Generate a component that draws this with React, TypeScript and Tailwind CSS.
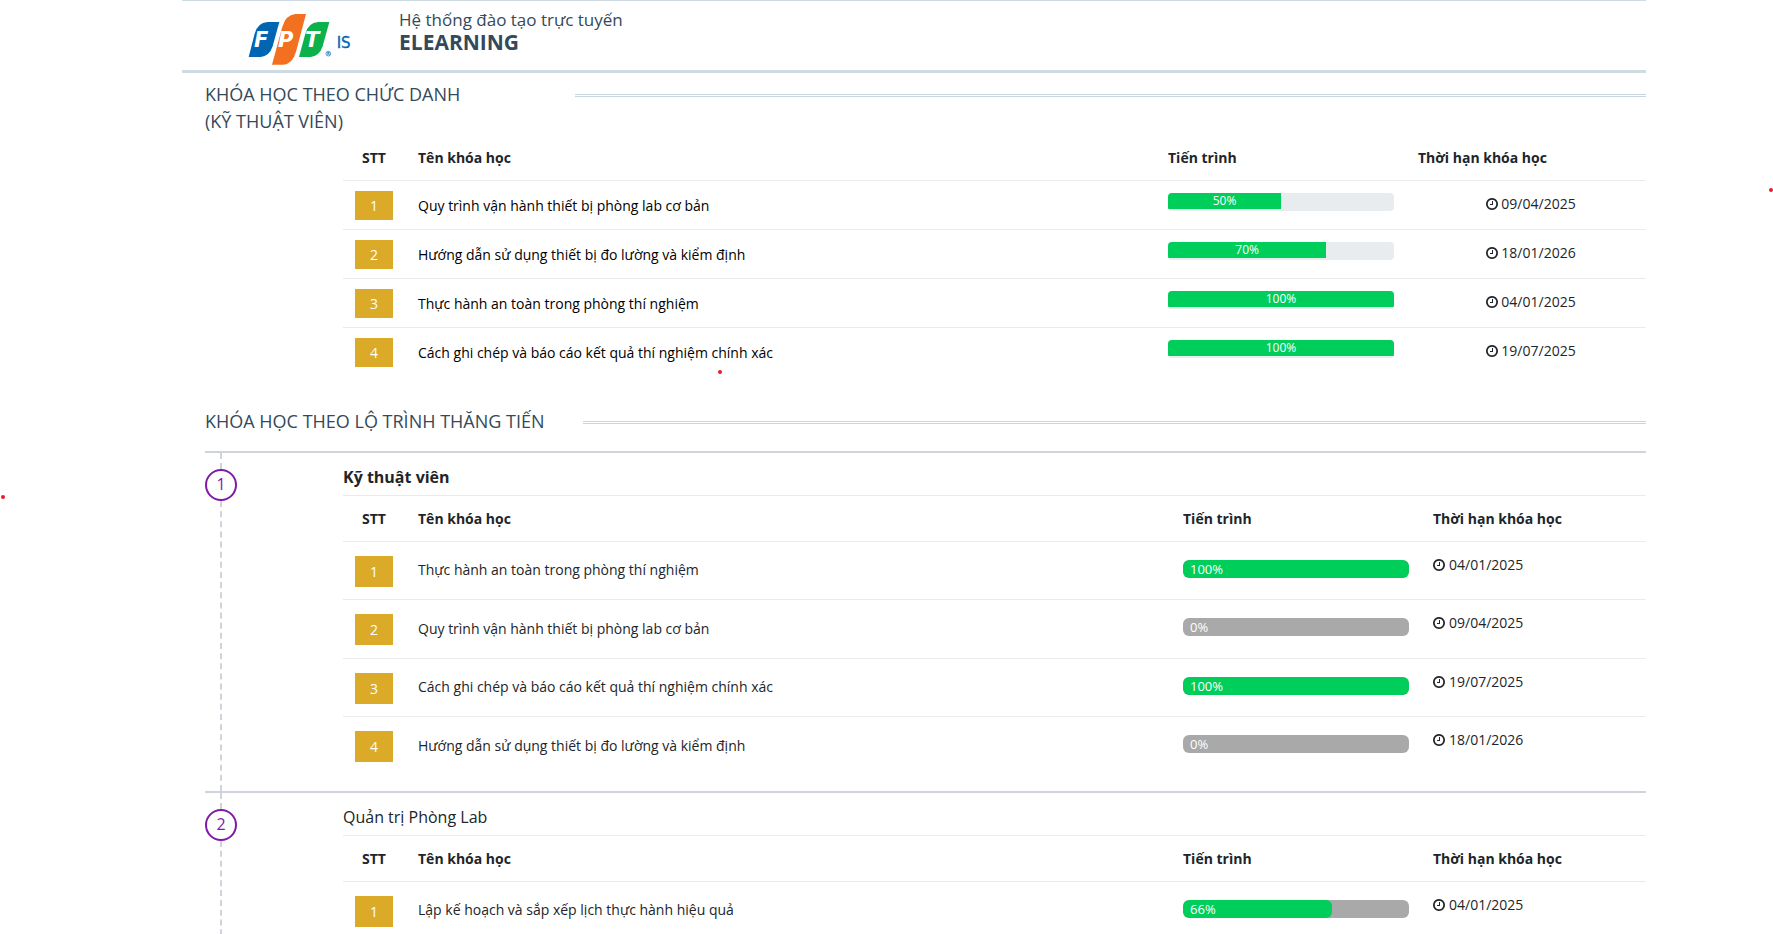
import React from 'react';

interface Course {
  name: string;
  progress: number;
  deadline: string;
}

interface Stage {
  title: string;
  current: boolean;
  courses: Course[];
}

const roleCourses: Course[] = [
  { name: 'Quy trình vận hành thiết bị phòng lab cơ bản', progress: 50, deadline: '09/04/2025' },
  { name: 'Hướng dẫn sử dụng thiết bị đo lường và kiểm định', progress: 70, deadline: '18/01/2026' },
  { name: 'Thực hành an toàn trong phòng thí nghiệm', progress: 100, deadline: '04/01/2025' },
  { name: 'Cách ghi chép và báo cáo kết quả thí nghiệm chính xác', progress: 100, deadline: '19/07/2025' },
];

const stages: Stage[] = [
  {
    title: 'Kỹ thuật viên',
    current: true,
    courses: [
      { name: 'Thực hành an toàn trong phòng thí nghiệm', progress: 100, deadline: '04/01/2025' },
      { name: 'Quy trình vận hành thiết bị phòng lab cơ bản', progress: 0, deadline: '09/04/2025' },
      { name: 'Cách ghi chép và báo cáo kết quả thí nghiệm chính xác', progress: 100, deadline: '19/07/2025' },
      { name: 'Hướng dẫn sử dụng thiết bị đo lường và kiểm định', progress: 0, deadline: '18/01/2026' },
    ],
  },
  {
    title: 'Quản trị Phòng Lab',
    current: false,
    courses: [
      { name: 'Lập kế hoạch và sắp xếp lịch thực hành hiệu quả', progress: 66, deadline: '04/01/2025' },
    ],
  },
];

const Logo: React.FC = () => (
  <svg width="120" height="65" viewBox="0 0 360 195" role="img" aria-label="FPT IS">
    <path d="M26 156 L44 86 Q53 53 82 51 L118 51 L98 124 Q89 153 62 156 Z" fill="#0066b3" />
    <path d="M96 179 L127 65 Q137 30 166 27 L198 27 L168 140 Q158 176 130 179 Z" fill="#f37021" />
    <path d="M177 156 L196 86 Q205 53 234 51 L268 51 L248 124 Q239 153 212 156 Z" fill="#0db14b" />
    <g fill="#fff" fontFamily="DejaVu Sans, sans-serif" fontWeight="700" fontStyle="italic" fontSize="63">
      <text x="42" y="127">F</text>
      <text x="114" y="127">P</text>
      <text x="195" y="127">T</text>
    </g>
    <circle cx="265" cy="146" r="7" fill="none" stroke="#0066b3" strokeWidth="2" />
    <text x="261" y="151" fill="#0066b3" fontFamily="Open Sans, sans-serif" fontWeight="700" fontSize="12">R</text>
    <text x="290" y="130" fill="#0066b3" stroke="#0066b3" fontFamily="DejaVu Sans Condensed, Open Sans, sans-serif" fontSize="50">IS</text>
  </svg>
);

const ClockIcon: React.FC = () => (
  <svg className="w-3 h-3 shrink-0" viewBox="0 128 1536 1536" fill="currentColor" aria-hidden="true">
    <path d="M896 544v448q0 14-9 23t-23 9h-320q-14 0-23-9t-9-23v-64q0-14 9-23t23-9h224v-352q0-14 9-23t23-9h64q14 0 23 9t9 23zm416 352q0-148-73-273t-198-198-273-73-273 73-198 198-73 273 73 273 198 198 273 73 273-73 198-198 73-273zm224 0q0 209-103 385.5t-279.5 279.5-385.5 103-385.5-103-279.5-279.5-103-385.5 103-385.5 279.5-279.5 385.5-103 385.5 103 279.5 279.5 103 385.5z" />
  </svg>
);

const TableHead: React.FC = () => (
  <thead>
    <tr className="h-[45px] border-b border-[#e9ecef]">
      <th scope="col" className="pt-[2px] text-center">STT</th>
      <th scope="col" className="pt-[2px] pl-[13px] text-left">Tên khóa học</th>
      <th scope="col" className="pt-[2px] pl-[10px] text-left">Tiến trình</th>
      <th scope="col" className="pt-[2px] pl-[10px] text-left">Thời hạn khóa học</th>
    </tr>
  </thead>
);

const RoleTable: React.FC<{ courses: Course[] }> = ({ courses }) => (
  <table className="w-full table-fixed text-sm">
    <colgroup>
      <col className="w-[62px]" />
      <col />
      <col className="w-[250px]" />
      <col className="w-[238px]" />
    </colgroup>
    <TableHead />
    <tbody>
      {courses.map((course, index) => (
        <tr key={course.name} className="h-[49px] border-b border-[#e9ecef] last:border-b-0">
          <td className="pt-[2px]">
            <div className="mx-auto w-[38px] bg-[#daaa28] text-center leading-[29px] text-white">{index + 1}</div>
          </td>
          <td className="pt-[2px] pl-[13px] text-black">{course.name}</td>
          <td className="px-[10px] pt-3 align-top">
            <div
              role="progressbar"
              aria-label={course.name}
              aria-valuenow={course.progress}
              className="h-[18px] w-[226px] overflow-hidden rounded bg-[#e9ecef]"
            >
              <div
                className="h-4 bg-[#00ce5b] text-center text-xs leading-4 text-white"
                style={{ width: `${course.progress}%` }}
              >
                {course.progress}%
              </div>
            </div>
          </td>
          <td className="pl-2">
            <div className="flex items-center justify-center gap-[3px] pb-[2px]">
              <ClockIcon />
              {course.deadline}
            </div>
          </td>
        </tr>
      ))}
    </tbody>
  </table>
);

const StageTable: React.FC<{ courses: Course[] }> = ({ courses }) => (
  <table className="w-full table-fixed text-sm">
    <colgroup>
      <col className="w-[62px]" />
      <col />
      <col className="w-[250px]" />
      <col className="w-[223px]" />
    </colgroup>
    <TableHead />
    <tbody>
      {courses.map((course, index) => (
        <tr key={course.name} className="h-[58px] border-b border-[#e9ecef] last:border-b-0 even:h-[59px]">
          <td className="pt-[2px]">
            <div className="mx-auto w-[38px] bg-[#daaa28] text-center leading-[31px] text-white">{index + 1}</div>
          </td>
          <td className="pl-[13px]">{course.name}</td>
          <td className="px-[10px] pt-[18px] align-top">
            <div
              role="progressbar"
              aria-label={course.name}
              aria-valuenow={course.progress}
              className="grid h-[18px] w-[226px] overflow-hidden rounded-md bg-[#a9a9a9]"
            >
              <div
                className="col-start-1 row-start-1 rounded-md bg-[#00ce5b]"
                style={{ width: `${course.progress}%` }}
              />
              <span className="col-start-1 row-start-1 pl-[7px] text-[13px] leading-[18px] text-white">
                {course.progress}%
              </span>
            </div>
          </td>
          <td className="pl-[10px]">
            <div className="flex items-center gap-1 pb-[11px]">
              <ClockIcon />
              {course.deadline}
            </div>
          </td>
        </tr>
      ))}
    </tbody>
  </table>
);

const DoubleLine: React.FC = () => (
  <div className="mt-[13px] h-[3px] flex-1 border-y border-[#c8d6de]" />
);

const App: React.FC = () => {
  return (
    <div className="relative h-screen overflow-hidden bg-white pr-[127px] pl-[182px] font-['Open_Sans','Noto_Sans',sans-serif] text-[#212529]">
      <header className="flex border-t border-b-[3px] border-[#cfdbe2] pl-[58px] text-[#34495a]">
        <div className="h-[69px] pt-1">
          <Logo />
        </div>
        <div className="pt-2 pl-[39px]">
          <div className="text-[17px] leading-[22px]">Hệ thống đào tạo trực tuyến</div>
          <h1 className="text-[21px] leading-[22px] font-bold">ELEARNING</h1>
        </div>
      </header>

      <main className="pl-[23px]">
        <section className="pt-2">
          <div className="flex">
            <h2 className="w-[370px] text-lg leading-[27px] text-[#34495a]">
              KHÓA HỌC THEO CHỨC DANH
              <br />
              (KỸ THUẬT VIÊN)
            </h2>
            <DoubleLine />
          </div>
          <div className="pl-[138px]">
            <RoleTable courses={roleCourses} />
          </div>
        </section>

        <section className="pt-8">
          <div className="mb-4 flex">
            <h2 className="w-[378px] text-lg leading-[27px] text-[#34495a]">KHÓA HỌC THEO LỘ TRÌNH THĂNG TIẾN</h2>
            <DoubleLine />
          </div>
          {stages.map((stage, index) => (
            <div key={stage.title} className="flex border-t-2 border-[#ced4da]">
              {/* timeline */}
              <div className="flex w-8 shrink-0 flex-col items-center">
                <div className="h-4 border-l-2 border-dashed border-[#ced4da]" />
                <div className="h-8 w-8 rounded-full border-2 border-[#7f1aa8] text-center leading-[26px] text-[#7f1aa8]">
                  {index + 1}
                </div>
                <div className="flex-1 border-l-2 border-dashed border-[#ced4da]" />
              </div>
              <div className="flex-1 pb-4 pl-[106px]">
                <h3
                  className={
                    stage.current
                      ? 'border-b border-[#e9ecef] pt-3 pb-[6px] text-base font-bold'
                      : 'border-b border-[#e9ecef] pt-3 pb-[6px] text-base'
                  }
                >
                  {stage.title}
                </h3>
                <StageTable courses={stage.courses} />
              </div>
            </div>
          ))}
        </section>
      </main>

      {/* marker dots */}
      <span className="absolute top-[370px] left-[718px] h-1 w-1 rounded-full bg-[#ed1c24]" />
      <span className="absolute top-[188px] right-0 h-1 w-1 rounded-full bg-[#ed1c24]" />
      <span className="absolute top-[495px] left-px h-1 w-1 rounded-full bg-[#ed1c24]" />
    </div>
  );
};

export default App;
